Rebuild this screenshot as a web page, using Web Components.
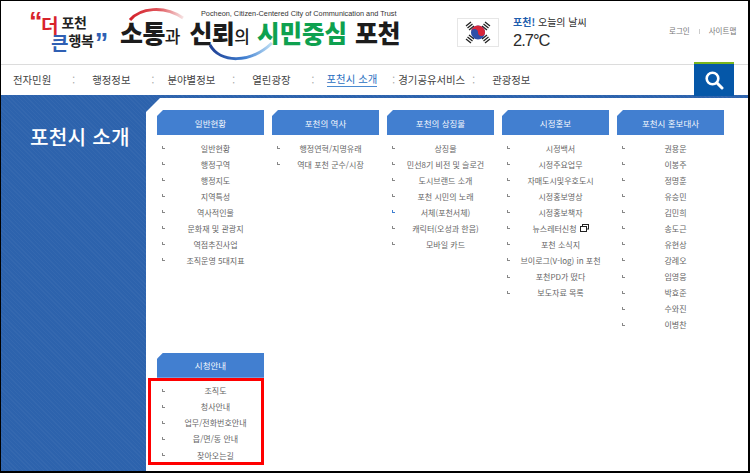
<!DOCTYPE html>
<html lang="ko">
<head>
<meta charset="utf-8">
<title>포천시 소개</title>
<style>
  html, body { margin: 0; padding: 0; background: #fff; }
  body { font-family: "Noto Sans CJK KR", "Liberation Sans", sans-serif; }
</style>
</head>
<body>
<site-page>
  <site-header></site-header>
  <site-nav></site-nav>
  <intro-section></intro-section>
</site-page>

<script>
class SitePage extends HTMLElement {
  constructor() {
    super();
    this.attachShadow({ mode: "open" }).innerHTML = `
      <style>
        :host {
          display: flex;
          flex-direction: column;
          box-sizing: border-box;
          width: 750px;
          height: 473px;
          overflow: hidden;
          background: #fff;
          border: solid #000;
          border-width: 1px 2px 2px 1px;
        }
      </style>
      <slot></slot>`;
  }
}

class SiteHeader extends HTMLElement {
  constructor() {
    super();
    this.attachShadow({ mode: "open" }).innerHTML = `
      <style>
        :host {
          display: flex;
          align-items: flex-start;
          height: 63px;
          border-bottom: 1px solid #dcdcdc;
          font-family: "Noto Sans CJK KR", sans-serif;
          flex: none;
        }
        .slogan {
          width: 76px; margin: 14px 0 0 28px; height: 36px;
          font-weight: 700; line-height: 1; color: #222;
        }
        .slogan .top, .slogan .bottom { display: flex; align-items: flex-start; white-space: nowrap; height: 20px; }
        .slogan .q { font: 700 27px/20px "Liberation Sans", sans-serif; width: 12px; margin-top: -3px; }
        .slogan .big { font-size: 19px; line-height: 19px; }
        .slogan .small { font-size: 14px; line-height: 14px; margin-left: 3px; letter-spacing: -.3px; }
        .slogan .bottom { margin: -2px 0 0 22px; }
        .slogan .bottom .small { margin-left: 0; }
        .slogan .bottom .q { margin: 0 0 0 1px; }
        .brand { margin: 4px 0 0 15px; width: 280px; position: relative; height: 56px; flex: none; }
        .brand svg { position: absolute; left: 0; top: 0; }
        .brand .en {
          position: absolute; left: 81px; top: 3px; white-space: nowrap;
          font: 7.300px/12px "Liberation Sans", sans-serif; color: #333;
        }
        .brand .main {
          position: absolute; left: 0; top: 13px; display: flex; align-items: baseline; white-space: nowrap;
          font-weight: 900; font-size: 25px; line-height: 28px; color: #1c1c1c; letter-spacing: -.6px;
        }
        .brand .main small { font-size: 17px; font-weight: 500; letter-spacing: 0; }
        .brand .main .green { color: #0ea14f; margin: 0 8px 0 7px; font-size: 24.500px; letter-spacing: 0; }
        .brand .main .si { margin-left: 9px; }
        .weather { margin: 16px 0 0 57px; display: flex; width: 212px; flex: none; }
        .weather-text { margin-left: 14px; color: #2b2b2b; }
        .weather-title { font-size: 10px; line-height: 13px; margin-top: -2px; white-space: nowrap; }
        .weather-title b { color: #1f5fae; }
        .temp { font: 16.500px/20px "Liberation Sans", sans-serif; letter-spacing: -1px; margin-top: 2px; }
        .flag { display: block; flex: none; }
        .util { margin: 24px 0 0 0; display: flex; align-items: center; font-size: 7.500px; color: #777; line-height: 12px; white-space: nowrap; }
        .util i { width: 1px; height: 5px; background: #ccc; margin: 0 9px; }
      </style>
      <div class="slogan">
        <div class="top"><span class="q" style="color:#d8232a">“</span><span class="big" style="color:#d8232a">더</span><span class="small">포천</span></div>
        <div class="bottom"><span class="big" style="color:#2f5fb3">큰</span><span class="small">행복</span><span class="q" style="color:#2f5fb3">”</span></div>
      </div>
      <div class="brand">
        <svg width="280" height="56" viewBox="0 0 280 56" fill="none">
          <defs>
            <linearGradient id="r" x1="0" x2="1"><stop offset="0" stop-color="#d4202a"/><stop offset=".55" stop-color="#e0565c"/><stop offset="1" stop-color="#f6e2e2"/></linearGradient>
            <linearGradient id="b" x1="0" x2="1"><stop offset="0" stop-color="#1f3f93"/><stop offset=".55" stop-color="#3f7ed0"/><stop offset="1" stop-color="#bfe0f6"/></linearGradient>
          </defs>
          <path d="M10 15 C20 3 44 0 63 13" stroke="url(#r)" stroke-width="3"/>
          <path d="M90 40 C100 58 130 59 152 38" stroke="url(#b)" stroke-width="3"/>
        </svg>
        <div class="en">Pocheon, Citizen-Centered City of Communication and Trust</div>
        <div class="main"><span>소통</span><small>과</small><span class="si">신뢰</span><small>의</small><span class="green">시민중심</span><span>포천</span></div>
      </div>
      <div class="weather">
        <svg class="flag" width="42" height="29" viewBox="0 0 42 29" style="margin-top:1px">
          <rect x=".5" y=".5" width="41" height="28" fill="#fff" stroke="#e6e6e6"/>
          <g stroke="#222" stroke-width="1.300">
            <path d="M10 8.500l5-4M11.500 10.500l5-4M13 12.500l5-4" transform="translate(-1 -.5)"/>
            <path d="M26 4.500l5 4M24.500 6.500l5 4M23 8.500l5 4" transform="translate(2 -.5)"/>
            <path d="M10 20.500l5 4M11.500 18.500l5 4M13 16.500l5 4" transform="translate(-1 .5)"/>
            <path d="M26 24.500l5-4M24.500 22.500l5-4M23 20.500l5-4" transform="translate(2 .5)"/>
          </g>
          <circle cx="21" cy="14.500" r="7" fill="#2f4fa8"/>
          <path d="M14 14.500a7 7 0 0 1 14 0a3.500 3.500 0 0 1-7 0a3.500 3.500 0 0 0-7 0z" fill="#d8263a"/>
        </svg>
        <div class="weather-text">
          <div class="weather-title"><b>포천!</b> 오늘의 날씨</div>
          <div class="temp">2.7°C</div>
        </div>
      </div>
      <div class="util"><span>로그인</span><i></i><span>사이트맵</span></div>`;
  }
}

class SiteNav extends HTMLElement {
  constructor() {
    super();
    const items = ["전자민원", "행정정보", "분야별정보", "열린광장", "포천시 소개", "경기공유서비스", "관광정보"];
    const seps = [[41, 21], [37, 21], [37, 17], [36, 21], [21, 15], [27, 7]];
    this.attachShadow({ mode: "open" }).innerHTML = `
      <style>
        :host {
          display: flex;
          align-items: center;
          height: 28px;
          padding: 0 0 2px 12px;
          flex: none;
          position: relative;
          font-family: "Noto Sans CJK KR", sans-serif;
          font-size: 10.400px;
          color: #444;
        }
        a { white-space: nowrap; line-height: 15px; display: block; box-sizing: border-box; }
        a.on { color: #2a6fc0; border-bottom: 1px solid #4a8ad0; }
        .sep { color: #aaa; font-size: 10px; line-height: 15px; box-sizing: border-box; flex: none; }
        .search {
          position: absolute; right: 14px; top: -3px; width: 40px; height: 34px;
          box-sizing: border-box; background: #0557a8; border-top: 2px solid #7ab51d;
          display: flex; align-items: center; justify-content: center;
        }
      </style>
      ${items.map((t, i) => `<a class="${i === 4 ? "on" : ""}">${t}</a>` +
        (seps[i] ? `<span class="sep" style="width:${seps[i][0]}px;padding-left:${seps[i][1]}px">:</span>` : "")).join("")}
      <div class="search">
        <svg width="20" height="20" viewBox="0 0 20 20" fill="none" stroke="#fff">
          <circle cx="8.500" cy="8.500" r="5.800" stroke-width="2.600"/>
          <path d="M12.800 12.800L18 18" stroke-width="3" stroke-linecap="round"/>
        </svg>
      </div>`;
  }
}

class IntroSection extends HTMLElement {
  constructor() {
    super();
    const cols = [
      ["일반현황", ["일반현황", "행정구역", "행정지도", "지역특성", "역사적인물", "문화재 및 관광지", "역점추진사업", "조직운영 5대지표"]],
      ["포천의 역사", ["행정연혁/지명유래", "역대 포천 군수/시장"]],
      ["포천의 상징물", ["상징물", "민선8기 비전 및 슬로건", "도시브랜드 소개", "포천 시민의 노래", "서체(포천서체)|on", "캐릭터(오성과 한음)", "모바일 카드"]],
      ["시정홍보", ["시정백서", "시정주요업무", "자매도시및우호도시", "시정홍보영상", "시정홍보책자", "뉴스레터신청|new", "포천 소식지", "브이로그(V-log) in 포천", "포천PD가 떴다", "보도자료 목록"]],
      ["포천시 홍보대사", ["권용운", "이봉주", "정명훈", "유승민", "김민희", "송도근", "유현상", "강례오", "임영웅", "박효준", "수와진", "이병찬"]],
      ["시청안내", ["조직도", "청사안내", "업무/전화번호안내", "읍/면/동 안내", "찾아오는길"]]
    ];
    this.attachShadow({ mode: "open" }).innerHTML = `
      <style>
        :host {
          display: flex;
          flex: 1;
          min-height: 0;
          box-sizing: border-box;
          padding-top: 3px;
          background-color: #2d63ad;
          background-image: repeating-linear-gradient(45deg, rgba(255,255,255,.03) 0 1px, transparent 1px 3px);
          font-family: "Noto Sans CJK KR", sans-serif;
        }
        .side { width: 145px; flex: none; }
        h1 { margin: 26px 0 0 29px; font-size: 20.200px; line-height: 26px; font-weight: 500; color: #fff; white-space: nowrap; letter-spacing: .2px; }
        .panel {
          flex: 1; background: #fff; position: relative;
          clip-path: polygon(14px 0, 100% 0, 100% 100%, 0 100%, 0 14px);
          display: grid;
          grid-template-columns: repeat(5, 107px);
          grid-auto-rows: max-content;
          column-gap: 8px;
          row-gap: 20px;
          padding: 12px 0 0 11px;
          align-content: start;
        }
        .mark {
          position: absolute; left: 2px; top: 280px; width: 116px; height: 87px;
          box-sizing: border-box; border: 3px solid #f00; pointer-events: none;
        }
      </style>
      <div class="side"><h1>포천시 소개</h1></div>
      <div class="panel">
        ${cols.map(([head, rows]) => `<menu-col head="${head}" rows="${rows.join(";")}"></menu-col>`).join("")}
        <div class="mark"></div>
      </div>`;
  }
}

class MenuCol extends HTMLElement {
  connectedCallback() {
    const rows = this.getAttribute("rows").split(";");
    this.attachShadow({ mode: "open" }).innerHTML = `
      <style>
        :host { display: block; font-family: "Noto Sans CJK KR", sans-serif; }
        h2 {
          margin: 0; height: 25px; display: flex; align-items: center; justify-content: center;
          background: #427fd0; color: #f4f8fd; font-size: 8.500px; font-weight: 400; white-space: nowrap;
          clip-path: polygon(6px 0, 100% 0, 100% 100%, 0 100%, 0 6px);
        }
        ul { list-style: none; margin: 0; padding: 5px 0 0; }
        li {
          height: 16.070px; display: flex; align-items: center; justify-content: center; position: relative;
          font-size: 8px; color: #666; white-space: nowrap; padding-left: 10px;
        }
        li::before {
          content: ""; position: absolute; left: 5px; top: 6px; width: 2px; height: 2px;
          border: solid #888; border-width: 0 0 1px 1px;
        }
        li.on::before { border-color: #3f7fd0; }
        svg { margin-left: 3px; }
      </style>
      <h2>${this.getAttribute("head")}</h2>
      <ul>
        ${rows.map(r => {
          const [label, flag] = r.split("|");
          return `<li class="${flag === "on" ? "on" : ""}">${label}${flag === "new" ? `<svg width="9" height="8" viewBox="0 0 9 8" fill="none" stroke="#222"><rect x="2.500" y=".5" width="6" height="4.500"/><rect x=".5" y="2.500" width="6" height="5" fill="#fff"/></svg>` : ""}</li>`;
        }).join("")}
      </ul>`;
  }
}

customElements.define("site-page", SitePage);
customElements.define("site-header", SiteHeader);
customElements.define("site-nav", SiteNav);
customElements.define("menu-col", MenuCol);
customElements.define("intro-section", IntroSection);
</script>
</body>
</html>
